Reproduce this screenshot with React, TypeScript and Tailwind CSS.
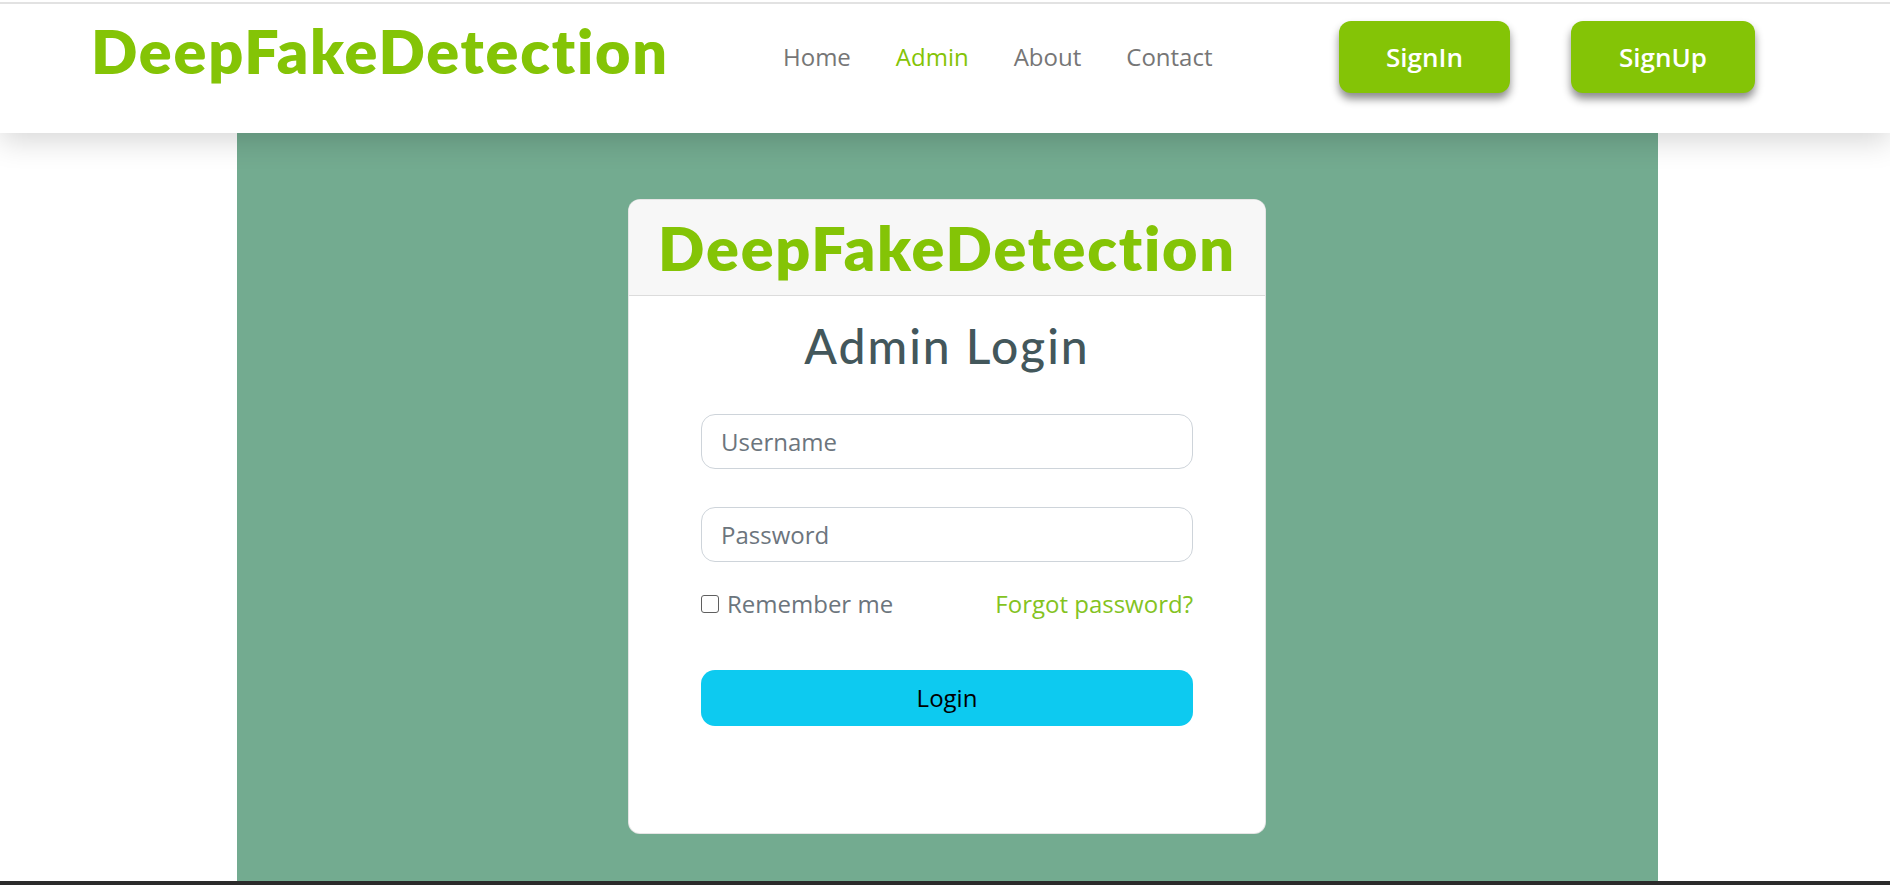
import { useState } from 'react';

const openSans = { fontFamily: '"Open Sans", "Liberation Sans", sans-serif' };

const NavBar = () => {
  const links = ['Home', 'Admin', 'About', 'Contact'];
  return (
    <header className="relative z-10 bg-white shadow-[0_8px_28px_rgba(0,0,0,0.16)]">
      <div className="h-[2px] bg-white" />
      <div className="h-[2px] bg-[#e2e2e2]" />
      <div className="flex items-center h-[106px] pl-[91px]">
        {/* Logo */}
        <div className="w-[692px] mb-[14px]">
          <span className="font-['Lato',sans-serif] font-extrabold text-[61px] leading-none tracking-[1.8px] text-[#84c406]">
            DeepFakeDetection
          </span>
        </div>

        {/* Navigation */}
        <nav className="w-[556px] flex items-center gap-[45px]" style={openSans}>
          {links.map((l) => (
            <a
              key={l}
              href="#"
              className={`text-[24px] leading-none ${l === 'Admin' ? 'text-[#84c406]' : 'text-[#767676]'}`}
            >
              {l}
            </a>
          ))}
        </nav>

        {/* Actions */}
        <div className="flex items-center gap-[61px]" style={openSans}>
          <button className="h-[72px] px-[47px] rounded-[12px] bg-[#84c406] text-white text-[26px] font-semibold shadow-[0_6px_8px_rgba(0,0,0,0.45)]">
            SignIn
          </button>
          <button className="h-[72px] px-[48px] rounded-[12px] bg-[#84c406] text-white text-[26px] font-semibold shadow-[0_6px_8px_rgba(0,0,0,0.45)]">
            SignUp
          </button>
        </div>
      </div>
      <div className="h-[23px]" />
    </header>
  );
};

const LoginCard = () => {
  const [username, setUsername] = useState('');
  const [password, setPassword] = useState('');
  const [remember, setRemember] = useState(false);

  return (
    <div className="w-[638px] h-[635px] bg-white rounded-[12px] overflow-hidden border border-black/10 flex flex-col">
      <div className="h-[96px] bg-[#f7f7f7] border-b border-[#dcdcdc] flex items-center justify-center">
        <span className="font-['Lato',sans-serif] font-extrabold text-[61px] leading-none tracking-[1.8px] text-[#84c406]">
          DeepFakeDetection
        </span>
      </div>

      <div className="px-[72px] flex flex-col">
        <h2 className="mt-[22px] text-center font-['Lato',sans-serif] font-medium text-[48px] leading-[56px] tracking-[2px] text-[#43575b]">
          Admin Login
        </h2>

        <form className="flex flex-col" style={openSans} onSubmit={(e) => e.preventDefault()}>
          <input
            type="text"
            value={username}
            onChange={(e) => setUsername(e.target.value)}
            placeholder="Username"
            className="mt-[40px] h-[55px] w-full rounded-[14px] border border-[#ced4da] px-[19px] text-[24px] text-[#212529] placeholder:text-[#6c757d] outline-none"
          />
          <input
            type="password"
            value={password}
            onChange={(e) => setPassword(e.target.value)}
            placeholder="Password"
            className="mt-[38px] h-[55px] w-full rounded-[14px] border border-[#ced4da] px-[19px] text-[24px] text-[#212529] placeholder:text-[#6c757d] outline-none"
          />

          <div className="mt-[24px] flex items-center justify-between text-[24px]">
            <label className="flex items-center gap-[8px] text-[#6c757d]">
              <input
                type="checkbox"
                checked={remember}
                onChange={(e) => setRemember(e.target.checked)}
                className="appearance-none w-[18px] h-[18px] rounded-[3px] border-[1.5px] border-[#5f5f5f] bg-white"
              />
              Remember me
            </label>
            <a href="#" className="text-[#84c31f]">
              Forgot password?
            </a>
          </div>

          <button
            type="submit"
            className="mt-[48px] h-[56px] w-full rounded-[14px] bg-[#0dcaf0] text-black text-[24px] font-medium"
          >
            Login
          </button>
        </form>
      </div>
    </div>
  );
};

export default function App() {
  return (
    <div className="w-[1890px] h-[885px] bg-white overflow-hidden flex flex-col">
      <NavBar />
      <main className="flex justify-center">
        <section className="w-[1421px] h-[748px] ml-[4px] bg-[#73ab90] flex justify-center pt-[66px]">
          <LoginCard />
        </section>
      </main>
      <div className="h-[4px] bg-[#2b2b2b]" />
    </div>
  );
}
